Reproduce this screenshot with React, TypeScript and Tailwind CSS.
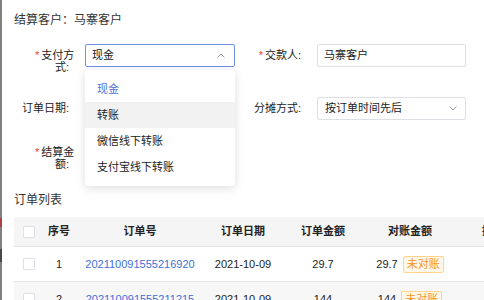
import React from 'react';

const font = "font-['Liberation_Sans','Noto_Sans_CJK_SC',sans-serif]";

const Chevron: React.FC<{ up?: boolean }> = ({ up }) => (
  <svg width="8" height="5" viewBox="0 0 8 5" className="shrink-0">
    <polyline
      points={up ? '0.5,4.5 4,1 7.5,4.5' : '0.5,0.5 4,4 7.5,0.5'}
      fill="none"
      stroke="#a0a0a0"
      strokeWidth="1"
    />
  </svg>
);

const Star = () => <span className="text-[#f0441e] mr-[2px]">*</span>;

const Checkbox = () => (
  <div className="w-[12px] h-[12px] border border-[#dcdfe6] rounded-[1px] bg-white" />
);

const Tag = () => (
  <span className="ml-[5px] inline-flex items-center h-[17px] px-[3px] border border-[#ffd38a] bg-[#fff8e8] text-[#f7941d] text-[11px] rounded-[2px] leading-none">
    未对账
  </span>
);

const options = ['现金', '转账', '微信线下转账', '支付宝线下转账'];

const rows = [
  { no: '1', order: '202110091555216920', date: '2021-10-09', amount: '29.7', rec: '29.7' },
  { no: '2', order: '202110091555211215', date: '2021-10-09', amount: '144', rec: '144' },
];

export default function App() {
  return (
    <div className={`w-[484px] h-[300px] overflow-hidden flex bg-white text-[#222] ${font}`}>
      <div className="w-[2px] shrink-0 flex flex-col bg-[#7f7f7f]">
        <div className="h-[218px]" />
        <div className="h-[9px] bg-[#b04040]" />
        <div className="h-[22px]" />
        <div className="h-[13px] bg-[#4a4a4a]" />
      </div>

      <div className="flex-1 pl-[12px] pt-[12px] min-w-0">
        <div className="h-[16px] leading-[16px] text-[12px] text-[#333]">结算客户：马寨客户</div>

        {/* row 1 */}
        <div className="mt-[16px] h-[23px] flex text-[11px]">
          <div className="w-[71px] shrink-0 pt-[5px] leading-[12px]">
            <div className="pl-[21px] whitespace-nowrap"><Star />支付方</div>
            <div className="pl-[41px] whitespace-nowrap">式:</div>
          </div>
          <div className="relative w-[150px] shrink-0">
            <div className="h-[23px] border border-[#7391e2] rounded-[2px] flex items-center justify-between pl-[6px] pr-[9px]">
              <span>现金</span>
              <Chevron up />
            </div>
            <div className="absolute left-0 top-[26px] w-[150px] bg-white rounded-[4px] shadow-[0_2px_10px_rgba(0,0,0,0.14)] py-[6px] z-10">
              {options.map((o, i) => (
                <div
                  key={o}
                  className={`h-[26px] flex items-center pl-[12px] ${i === 0 ? 'text-[#4a72dc]' : ''} ${i === 1 ? 'bg-[#f2f2f2]' : ''}`}
                >
                  {o}
                </div>
              ))}
            </div>
          </div>
          <div className="w-[82px] shrink-0 flex items-center justify-end pr-[16px] whitespace-nowrap">
            <Star />交款人:
          </div>
          <div className="w-[149px] h-[23px] shrink-0 border border-[#dcdfe6] rounded-[2px] flex items-center pl-[6px]">
            马寨客户
          </div>
        </div>

        {/* row 2 */}
        <div className="mt-[30px] h-[23px] flex text-[11px]">
          <div className="w-[71px] shrink-0 flex items-center justify-end pr-[16px] whitespace-nowrap">订单日期:</div>
          <div className="w-[150px] shrink-0 h-[23px] border border-[#dcdfe6] rounded-[2px]" />
          <div className="w-[82px] shrink-0 flex items-center justify-end pr-[16px] whitespace-nowrap">分摊方式:</div>
          <div className="w-[149px] h-[23px] shrink-0 border border-[#dcdfe6] rounded-[2px] flex items-center justify-between pl-[7px] pr-[8px]">
            <span>按订单时间先后</span>
            <Chevron />
          </div>
        </div>

        {/* row 3 */}
        <div className="mt-[21px] h-[30px] flex text-[11px]">
          <div className="w-[71px] shrink-0 pt-[5px] leading-[12px]">
            <div className="pl-[21px] whitespace-nowrap"><Star />结算金</div>
            <div className="pl-[41px] whitespace-nowrap">额:</div>
          </div>
          <div className="w-[150px] shrink-0 h-[23px] border border-[#dcdfe6] rounded-[2px]" />
        </div>

        <div className="mt-[21px] h-[16px] leading-[16px] text-[12px] text-[#333]">订单列表</div>

        {/* table */}
        <div className="mt-[9px] text-[11px] overflow-hidden">
          <div className="h-[30px] flex items-center bg-[#f5f5f5] border-b border-[#e6e6e6] font-bold whitespace-nowrap">
            <div className="w-[30px] pl-[9px] shrink-0"><Checkbox /></div>
            <div className="w-[30px] shrink-0 text-center">序号</div>
            <div className="w-[132px] shrink-0 text-center">订单号</div>
            <div className="w-[74px] shrink-0 text-center">订单日期</div>
            <div className="w-[86px] shrink-0 text-center">订单金额</div>
            <div className="w-[88px] shrink-0 text-center">对账金额</div>
            <div className="w-[60px] shrink-0 pl-[28px]">操作</div>
          </div>
          {rows.map((r, i) => (
            <div
              key={r.no}
              className={`h-[35px] flex items-center border-b border-[#e6e6e6] whitespace-nowrap ${i === 1 ? 'bg-[#f7f7f7]' : ''}`}
            >
              <div className="w-[30px] pl-[9px] shrink-0"><Checkbox /></div>
              <div className="w-[30px] shrink-0 text-center">{r.no}</div>
              <div className="w-[132px] shrink-0 text-center text-[#3f6fd8]">{r.order}</div>
              <div className="w-[74px] shrink-0 text-center">{r.date}</div>
              <div className="w-[86px] shrink-0 text-center">{r.amount}</div>
              <div className="w-[88px] shrink-0 flex items-center justify-center">
                <span>{r.rec}</span>
                <Tag />
              </div>
            </div>
          ))}
        </div>
      </div>
    </div>
  );
}
